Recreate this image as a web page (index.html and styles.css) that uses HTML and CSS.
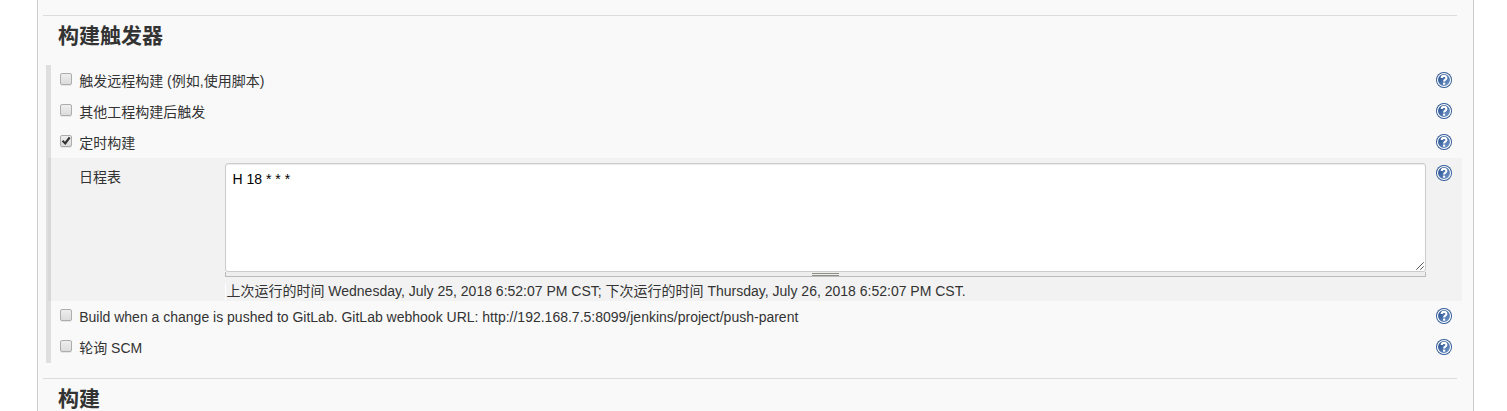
FILE: index.html
```html
<!DOCTYPE html>
<html lang="zh-CN">
<head>
<meta charset="utf-8">
<title>构建触发器</title>
<link rel="stylesheet" href="styles.css">
</head>
<body>
<svg class="defs" width="0" height="0">
  <defs>
    <linearGradient id="help-fill" x1="0" y1="0" x2="1" y2="1">
      <stop offset="0" stop-color="#1a4487"/><stop offset="1" stop-color="#7a9fd0"/>
    </linearGradient>
    <symbol id="help" viewBox="0 0 16 16">
      <circle cx="8" cy="8" r="8" fill="#315a98"/>
      <circle cx="8" cy="8" r="6.5" fill="url(#help-fill)" stroke="#fff" stroke-width="1.1"/>
      <path d="M5.7 6.1C5.7 3.2 10.4 3.2 10.4 5.9C10.4 7.7 8.1 7.5 8.1 9.6" fill="none" stroke="#fff" stroke-width="2.1"/>
      <rect x="7" y="10.6" width="2.2" height="2.1" fill="#fff"/>
    </symbol>
  </defs>
</svg>
<main class="panel">
  <section class="section">
    <h2 class="title">构建触发器</h2>
    <div class="options">
      <label class="row"><input class="check" type="checkbox"><span class="label">触发远程构建 (例如,使用脚本)</span><svg class="help"><use href="#help"/></svg></label>
      <label class="row"><input class="check" type="checkbox"><span class="label">其他工程构建后触发</span><svg class="help"><use href="#help"/></svg></label>
      <label class="row"><input class="check" type="checkbox" checked><span class="label">定时构建</span><svg class="help"><use href="#help"/></svg></label>
      <div class="schedule">
        <span class="schedule-name">日程表</span>
        <div class="editor">
          <div class="field">
            <textarea class="text" spellcheck="false">H 18 * * *</textarea>
            <svg class="grip" viewBox="0 0 8 8"><path d="M.3 7.7L7.7 .3M4.3 7.7L7.7 4.3" stroke="#555"/></svg>
          </div>
          <div class="handle"><i class="bars"></i></div>
          <div class="note">上次运行的时间 Wednesday, July 25, 2018 6:52:07 PM CST; 下次运行的时间 Thursday, July 26, 2018 6:52:07 PM CST.</div>
        </div>
        <svg class="help"><use href="#help"/></svg>
      </div>
      <label class="row"><input class="check" type="checkbox"><span class="label">Build when a change is pushed to GitLab. GitLab webhook URL: http://192.168.7.5:8099/jenkins/project/push-parent</span><svg class="help"><use href="#help"/></svg></label>
      <label class="row"><input class="check" type="checkbox"><span class="label">轮询 SCM</span><svg class="help"><use href="#help"/></svg></label>
    </div>
  </section>
  <section class="section">
    <h2 class="title">构建</h2>
  </section>
</main>
</body>
</html>
```
FILE: styles.css
```css
* { box-sizing: border-box; }
body {
  margin: 0;
  height: 411px;
  overflow: hidden;
  background: #fff;
  color: #333;
  font: 14px/20px "Liberation Sans", "Noto Sans CJK SC", sans-serif;
}
.defs { position: absolute; }
.panel {
  width: 1437px;
  height: 411px;
  margin-left: 37px;
  padding: 15px 11px 0 5px;
  overflow: hidden;
  background: #f9f9f9;
  border: solid #ccc;
  border-width: 0 1px;
}
.section { height: 363px; }
.title {
  width: 1414px;
  height: 50px;
  margin: 0;
  padding: 5px 0 0 15px;
  border-top: 1px solid #ddd;
  font-size: 21px;
  line-height: 30px;
  font-weight: bold;
}
.options {
  width: 1416px;
  height: 298px;
  margin-left: 3px;
  border-left: 5px solid #dfdfdf;
}
.row {
  display: flex;
  align-items: flex-start;
  height: 31px;
  padding: 7px 10px 0 9px;
}
.label { flex: 1; margin-left: 7.2px; line-height: 19px; white-space: nowrap; }
.help { flex: none; width: 16px; height: 16px; }
.check {
  appearance: none;
  display: grid;
  width: 12px;
  height: 12px;
  margin: 1px 0 0;
  border: 1px solid #adadad;
  border-radius: 2px;
  background: linear-gradient(#eee, #dcdcdc);
  box-shadow: 0 1px 0 #e6e6e6;
}
.check:checked::before {
  content: "";
  width: 10px;
  height: 10px;
  background: #333;
  clip-path: polygon(8% 54%, 23% 40%, 40% 57%, 78% 7%, 96% 20%, 44% 91%);
}
.schedule {
  display: flex;
  height: 143px;
  margin-left: -3px;
  padding: 5px 10px 0 31px;
  background: rgba(0, 0, 0, .026);
}
.schedule-name { width: 146px; padding-top: 4px; }
.editor { width: 1201px; margin-right: 10px; }
.schedule .help { margin-top: 2px; }
.field { position: relative; height: 109px; }
.text {
  display: block;
  width: 100%;
  height: 109px;
  padding: 5px 6.5px;
  border: 1px solid #ccc;
  border-radius: 3px;
  background: #fff;
  box-shadow: inset 0 1px 1px rgba(0, 0, 0, .08);
  color: #000;
  font: inherit;
  resize: none;
  outline: 0;
}
.grip { position: absolute; right: 2px; bottom: 2px; width: 8px; height: 8px; }
.handle {
  display: flex;
  justify-content: center;
  height: 5px;
  background: #eee;
  border: solid #bbb;
  border-width: 0 1px 1px;
}
.bars { width: 27px; height: 3px; margin-top: 1px; border: solid #8e8e84; border-width: 1px 0; }
.note { height: 16px; margin-top: 7px; padding-left: .4px; border-left: 1px solid #fff; line-height: 14px; white-space: nowrap; }
```
